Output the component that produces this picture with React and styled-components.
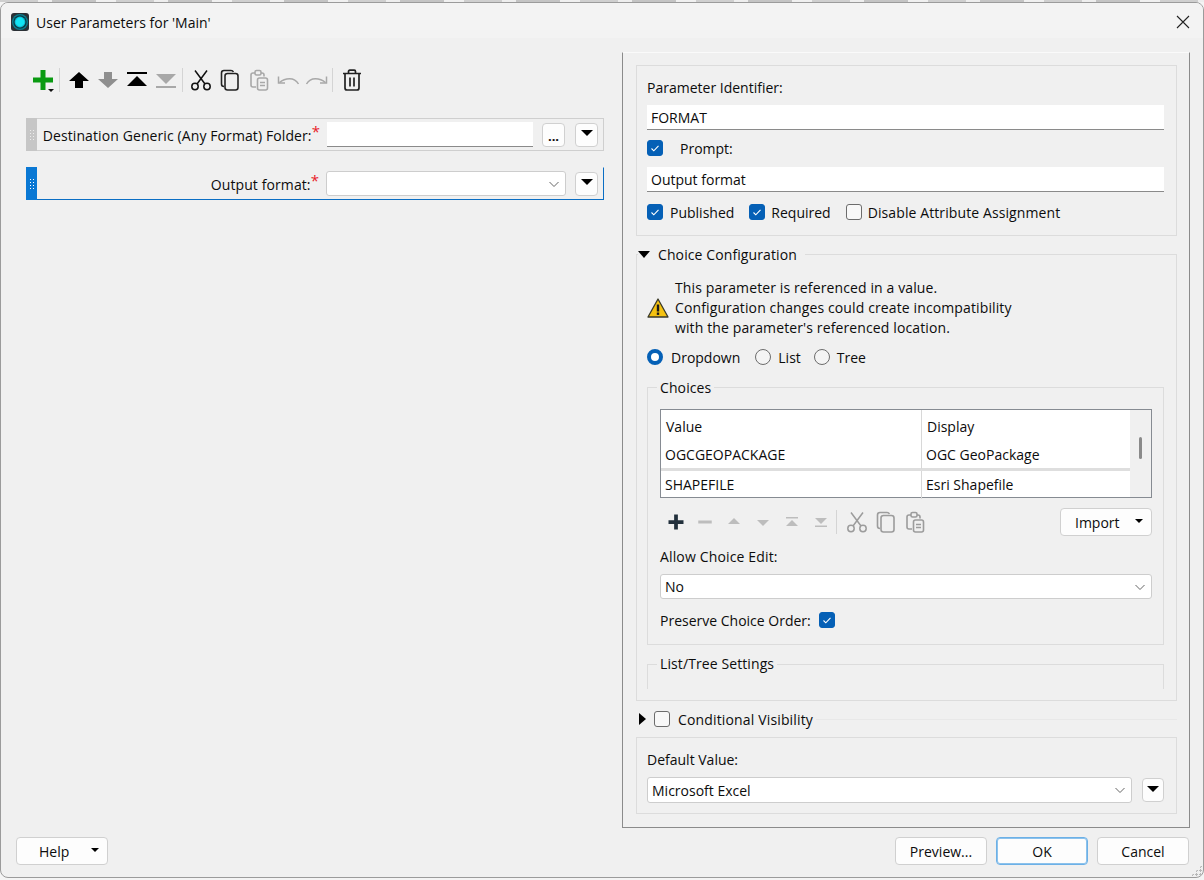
import React from "react";
import styled, { createGlobalStyle } from "styled-components";

const GlobalStyle = createGlobalStyle`
  html, body {
    margin: 0;
    padding: 0;
    background: #f4f4f4;
  }
  * {
    box-sizing: border-box;
  }
  body {
    font-family: "Open Sans", "Noto Sans", sans-serif;
    font-size: 14px;
    color: #0c0c0c;
  }
`;

// icons, all drawn on a 24 unit grid
const Plus = ({ color = "#0a9a12", size = 24 }) => (
  <svg width={size} height={size} viewBox="0 0 24 24">
    <path d="M9.5 2h5v7.5H22v5h-7.5V22h-5v-7.5H2v-5h7.5z" fill={color} />
  </svg>
);
const Minus = ({ size = 24, color = "#bdbdbd" }) => (
  <svg width={size} height={size} viewBox="0 0 24 24">
    <rect x="3" y="10" width="18" height="4" fill={color} />
  </svg>
);
const ArrowUp = ({ color, size = 24 }) => (
  <svg width={size} height={size} viewBox="0 0 24 24">
    <path d="M12 4l10 9h-6v7H8v-7H2z" fill={color} />
  </svg>
);
const ArrowDown = ({ color, size = 24 }) => (
  <svg width={size} height={size} viewBox="0 0 24 24">
    <path d="M12 20L2 11h6V4h8v7h6z" fill={color} />
  </svg>
);
const ToTop = ({ color, size = 24 }) => (
  <svg width={size} height={size} viewBox="0 0 24 24">
    <rect x="2" y="4" width="20" height="2" fill={color} />
    <path d="M12 8l10 10H2z" fill={color} />
  </svg>
);
const ToBottom = ({ color, size = 24 }) => (
  <svg width={size} height={size} viewBox="0 0 24 24">
    <rect x="2" y="18" width="20" height="2" fill={color} />
    <path d="M12 16L2 6h20z" fill={color} />
  </svg>
);
const SmallUp = ({ color }) => (
  <svg width="24" height="24" viewBox="0 0 24 24">
    <path d="M12 8l6 6H6z" fill={color} />
  </svg>
);
const SmallDown = ({ color }) => (
  <svg width="24" height="24" viewBox="0 0 24 24">
    <path d="M12 16l-6-6h12z" fill={color} />
  </svg>
);
const SmallTop = ({ color }) => (
  <svg width="24" height="24" viewBox="0 0 24 24">
    <rect x="6" y="7" width="12" height="1.5" fill={color} />
    <path d="M12 10l6 6H6z" fill={color} />
  </svg>
);
const SmallBottom = ({ color }) => (
  <svg width="24" height="24" viewBox="0 0 24 24">
    <rect x="6" y="15.5" width="12" height="1.5" fill={color} />
    <path d="M12 14L6 8h12z" fill={color} />
  </svg>
);
const Scissors = ({ color }) => (
  <svg width="24" height="24" viewBox="0 0 24 24" fill="none" stroke={color} strokeWidth="1.5">
    <circle cx="6" cy="18.5" r="3.2" />
    <circle cx="18" cy="18.5" r="3.2" />
    <path d="M8 16L18 2.5M16 16L6 2.5" />
  </svg>
);
const Copy = ({ color }) => (
  <svg width="24" height="24" viewBox="0 0 24 24" fill="none" stroke={color} strokeWidth="1.6">
    <path d="M6 18.5c-1.4 0-2.5-1-2.5-2.5V5c0-1.4 1-2.5 2.5-2.5h7c1.2 0 2 .6 2.4 1.5" />
    <rect x="7" y="5.5" width="13" height="16.5" rx="2.5" />
  </svg>
);
const Paste = ({ color }) => (
  <svg width="24" height="24" viewBox="0 0 24 24" fill="none" stroke={color} strokeWidth="1.6">
    <path d="M9 19H6c-1.2 0-2-1-2-2V7c0-1.2.8-2 2-2h2M14 5h1c1.2 0 2 .8 2 2v1.5" />
    <rect x="8" y="2.5" width="6" height="4.5" rx="1.5" />
    <rect x="10.5" y="10" width="10" height="12" rx="2" />
    <path d="M13 14.5h5M13 17.5h5" />
  </svg>
);
const Undo = ({ color }) => (
  <svg width="24" height="24" viewBox="0 0 24 24" fill="none" stroke={color} strokeWidth="1.5">
    <path d="M22.5 16c-2-3.5-5-5.3-9-5.3-3.5 0-6.8 1-10 3.8" />
    <path d="M2.5 8.5V15H9" />
  </svg>
);
const Redo = ({ color }) => (
  <svg width="24" height="24" viewBox="0 0 24 24" fill="none" stroke={color} strokeWidth="1.5">
    <path d="M1.5 16c2-3.5 5-5.3 9-5.3 3.5 0 6.8 1 10 3.8" />
    <path d="M21.5 8.5V15H15" />
  </svg>
);
const Trash = ({ color }) => (
  <svg width="24" height="24" viewBox="0 0 24 24" fill="none" stroke={color} strokeWidth="1.7">
    <path d="M3 5.5h18M8.5 5.5v-2c0-.8.5-1.3 1.3-1.3h4.4c.8 0 1.3.5 1.300 1.300v2" />
    <path d="M5 5.5V20c0 1.200.8 2 2 2h10c1.200 0 2-.8 2-2V5.500" />
    <path d="M10 9.500v9M14 9.500v9" />
  </svg>
);
const Chevron = () => (
  <svg width="12" height="12" viewBox="0 0 12 12" fill="none" stroke="#666" strokeWidth="1">
    <path d="M1.500 4L6 8.500 10.500 4" />
  </svg>
);
const CheckMark = () => (
  <svg width="12" height="12" viewBox="0 0 12 12" fill="none" stroke="#fff" strokeWidth="1.100">
    <path d="M2.500 6.500l2.300 2.300 4.700-5" />
  </svg>
);
const WarningIcon = () => (
  <svg width="22" height="22" viewBox="0 0 22 22">
    <path d="M11 2L21 20H1z" fill="#f5c211" stroke="#3a3a2a" strokeWidth="1.300" strokeLinejoin="round" />
    <rect x="9.800" y="7.500" width="2.400" height="7" fill="#1a1a1a" />
    <rect x="9.800" y="15.500" width="2.400" height="2.400" fill="#1a1a1a" />
  </svg>
);
const AppIcon = () => (
  <svg width="18" height="18" viewBox="0 0 18 18">
    <rect width="18" height="18" rx="3" fill="#2b3035" />
    <circle cx="9" cy="9" r="8" fill="#0a7f90" />
    <circle cx="9" cy="9" r="6.700" fill="#0a3c46" />
    <circle cx="9" cy="9" r="5.400" fill="#10b8cf" />
    <circle cx="9" cy="9" r="4.400" fill="#12e4f4" />
  </svg>
);
const CloseIcon = () => (
  <svg width="14" height="14" viewBox="0 0 14 14" stroke="#222" strokeWidth="1.100">
    <path d="M1 1l12 12M13 1L1 13" />
  </svg>
);

const Page = styled.div`
  width: 1204px;
  height: 880px;
  overflow: hidden;
`;

const BehindStrip = styled.div`
  height: 2px;
  background: repeating-linear-gradient(90deg, #cfcfcf 0 38px, #eeeeee 38px 52px, #c4c4c4 52px 96px, #f0f0f0 96px 116px);
`;

const Window = styled.div`
  position: relative;
  height: 876px;
  border: 1px solid #9b9b9b;
  border-radius: 8px;
  background: #f0f0f0;
  overflow: hidden;
`;

const TitleBar = styled.div`
  height: 35px;
  background: #f3f3f3;
  display: flex;
  align-items: center;
  padding: 3px 13px 0 10px;
`;

const Title = styled.div`
  margin-left: 7px;
  flex: 1;
  font-size: 14px;
`;

const Main = styled.div`
  display: flex;
  height: 789px;
`;

const LeftPane = styled.div`
  width: 621px;
  padding: 28px 18px 0 25px;
`;

const Toolbar = styled.div`
  display: flex;
  align-items: center;
  height: 28px;
`;

const ToolIcon = styled.span`
  display: flex;
  align-items: center;
  justify-content: center;
  width: ${(p) => p.$w || 29}px;
  height: 24px;
  flex: none;
`;

const ToolSep = styled.span`
  width: 1px;
  height: 24px;
  background: #d4d4d4;
  margin: 0 ${(p) => p.$right ?? 5}px 0 ${(p) => p.$left || 0}px;
  flex: none;
`;

const AddIcon = styled(ToolIcon)`
  position: relative;
  &::after {
    content: "";
    position: absolute;
    right: 5px;
    bottom: 0;
    border: 3px solid transparent;
    border-top-color: #111;
    border-bottom: 0;
  }
`;

const ParamRow = styled.div`
  display: flex;
  align-items: center;
  height: 33px;
  margin-top: ${(p) => p.$top}px;
  border: 1px solid ${(p) => (p.$active ? "transparent" : "#cfcfcf")};
  border-left: 0;
  ${(p) => p.$active && "border-right-color: #0a6ec4; border-bottom-color: #0a6ec4;"}
  padding-right: 5px;
`;

const Handle = styled.div`
  width: 11px;
  height: 33px;
  margin: -1px 0;
  flex: none;
  display: grid;
  grid-template-columns: 1px 1px;
  grid-auto-rows: 1px;
  gap: 2px;
  place-content: center;
  background: ${(p) => (p.$active ? "#0a78d4" : "#c6c6c6")};
  span {
    background: ${(p) => (p.$active ? "#fff" : "#ececec")};
  }
`;

const ParamLabel = styled.div`
  flex: 1;
  text-align: right;
  padding-right: 7px;
  white-space: nowrap;
  letter-spacing: 0.1px;
  em {
    font-style: normal;
    color: #e8202a;
    font-size: 15px;
    position: relative;
    top: -4px;
  }
`;

const TextInput = styled.div`
  height: 25px;
  width: ${(p) => (p.$w ? `${p.$w}px` : "100%")};
  background: #fff;
  border-bottom: 1px solid #8a8a8a;
  line-height: 26px;
  padding-left: 4px;
  margin-top: ${(p) => p.$top || 0}px;
  flex: none;
`;

const Select = styled.div`
  height: ${(p) => p.$h || 25}px;
  width: ${(p) => (p.$w ? `${p.$w}px` : "100%")};
  background: #fff;
  border: 1px solid #cdcdcd;
  border-radius: 3px;
  display: flex;
  align-items: center;
  justify-content: space-between;
  padding: 0 ${(p) => p.$chevron || 4}px 0 4px;
  margin-top: ${(p) => p.$top || 0}px;
  flex: none;
`;

const Button = styled.div`
  display: flex;
  align-items: center;
  justify-content: ${(p) => (p.$pad ? "flex-start" : "center")};
  padding-left: ${(p) => p.$pad || 0}px;
  position: relative;
  background: #fdfdfd;
  border: 1px solid ${(p) => (p.$primary ? "#6cb0e6" : "#d0d0d0")};
  ${(p) => p.$primary && "box-shadow: inset 0 0 0 1px #8cc2ec;"}
  border-radius: 4px;
  width: ${(p) => p.$w}px;
  height: ${(p) => p.$h || 28}px;
  margin-left: ${(p) => p.$left || 0}px;
  flex: none;
`;

const Caret = styled.span`
  position: absolute;
  right: ${(p) => p.$right}px;
  top: ${(p) => p.$top}px;
  border: ${(p) => p.$size}px solid transparent;
  border-top-color: #000;
  border-bottom: 0;
`;

const MenuCaret = styled.span`
  border: 6px solid transparent;
  border-top: 6px solid #000;
  border-bottom: 0;
  margin-top: -3px;
`;

const Dots = styled.span`
  font-weight: 700;
  line-height: 1;
  margin-top: 3px;
  font-size: 13px;
`;

const RightPanel = styled.div`
  width: 568px;
  height: 776px;
  margin-top: 14px;
  border: 1px solid #8b8b8b;
  border-top-color: #fafafa;
  padding: 12px 12px 0 13px;
  flex: none;
`;

const Section = styled.div`
  border: 1px solid #dcdcdc;
  height: ${(p) => p.$h}px;
  padding: 11px 12px 0 10px;
  margin-top: ${(p) => p.$top || 0}px;
`;

const Line = styled.div`
  display: flex;
  align-items: center;
  height: 20px;
  margin-top: ${(p) => p.$top || 0}px;
  white-space: nowrap;
  letter-spacing: ${(p) => p.$ls || 0}px;
`;

const Box = styled.span`
  width: 16px;
  height: 16px;
  border-radius: 3px;
  flex: none;
  display: flex;
  align-items: center;
  justify-content: center;
  background: ${(p) => (p.$on ? "#0560b6" : "#f8f8f8")};
  border: 1px solid ${(p) => (p.$on ? "#0560b6" : "#6c6c6c")};
  margin-left: ${(p) => p.$left || 0}px;
`;

const BoxLabel = styled.span`
  margin-left: ${(p) => p.$left || 7}px;
  letter-spacing: ${(p) => p.$ls || 0}px;
`;

const Radio = styled.span`
  width: 16px;
  height: 16px;
  border-radius: 50%;
  flex: none;
  background: ${(p) => (p.$on ? "#fff" : "#f4f4f4")};
  border: ${(p) => (p.$on ? "4px solid #0560b6" : "1px solid #6c6c6c")};
  margin-left: ${(p) => p.$left || 0}px;
`;

const Group = styled.fieldset`
  margin: ${(p) => p.$top || 0}px 0 0;
  padding: 0 12px 0 ${(p) => p.$pad}px;
  border: 1px solid #dcdcdc;
  height: ${(p) => p.$h}px;
  ${(p) => p.$open && "border-bottom: 0;"}
  min-width: 0;
`;

const Legend = styled.legend`
  height: 20px;
  line-height: 20px;
  padding: ${(p) => p.$padding};
  margin-left: ${(p) => p.$left || 0}px;
  display: flex;
  align-items: center;
  letter-spacing: 0.1px;
`;

const TriDown = styled.span`
  border: 6.5px solid transparent;
  border-top: 7px solid #000;
  border-bottom: 0;
  margin-right: 8px;
`;

const TriRight = styled.span`
  border: 6.5px solid transparent;
  border-left: 7px solid #000;
  border-right: 0;
  margin: 0 8px 0 3px;
  flex: none;
`;

const WarningRow = styled.div`
  display: flex;
  align-items: center;
  margin-top: 14px;
  line-height: 20px;
`;

const WarningText = styled.div`
  margin-left: 6px;
  letter-spacing: 0.12px;
`;

const ChoiceTable = styled.div`
  display: flex;
  height: 89px;
  margin-top: 12px;
  border: 1px solid #868b92;
  width: 492px;
`;

const TableBody = styled.div`
  width: 469px;
  background: #fff;
  flex: none;
`;

const TableRow = styled.div`
  display: grid;
  grid-template-columns: 261px 1fr;
  height: ${(p) => p.$h}px;
  line-height: ${(p) => p.$lh}px;
  border-bottom: ${(p) => (p.$rule ? "3px solid #dedede" : "0")};
  div {
    padding-left: ${(p) => p.$indent}px;
  }
  div:first-child {
    border-right: 1px solid #d8d8d8;
  }
`;

const ScrollTrack = styled.div`
  flex: 1;
  background: #f0f0f0;
  padding: 27px 0 0 9px;
`;

const ScrollThumb = styled.div`
  width: 3px;
  height: 22px;
  background: #8a8a8a;
  border-radius: 2px;
`;

const ChoiceTools = styled.div`
  display: flex;
  align-items: center;
  justify-content: space-between;
  margin-top: 10px;
  width: 492px;
  padding-left: 1px;
`;

const Rule = styled.span`
  flex: 1;
  height: 1px;
  background: #e8e8e8;
  margin-left: 3px;
`;

const DefaultRow = styled.div`
  display: flex;
  align-items: center;
  margin-top: 8px;
`;

const Footer = styled.div`
  display: flex;
  align-items: center;
  padding: 10px 14px 0 15px;
`;

const Spacer = styled.div`
  flex: 1;
`;

const Grip = styled.div`
  position: absolute;
  right: 1px;
  bottom: 1px;
  width: 11px;
  height: 11px;
  background: radial-gradient(circle at 1.5px 1.5px, #b8b8b8 1.2px, transparent 1.3px) 0 0 / 4px 4px;
  clip-path: polygon(100% 0, 100% 100%, 0 100%);
`;

const grey = "#a8a8a8";
const light = "#bdbdbd";
const stroke = "#9c9c9c";
const handleDots = [0, 1, 2, 3, 4, 5, 6, 7];

export default function App() {
  return (
    <Page>
      <GlobalStyle />
      <BehindStrip />
      <Window>
        <TitleBar>
          <AppIcon />
          <Title>User Parameters for 'Main'</Title>
          <CloseIcon />
        </TitleBar>
        <Main>
          <LeftPane>
            <Toolbar>
              <AddIcon $w={33}><Plus /></AddIcon>
              <ToolSep $right={4} />
              <ToolIcon><ArrowUp color="#000" /></ToolIcon>
              <ToolIcon><ArrowDown color="#8f8f8f" /></ToolIcon>
              <ToolIcon><ToTop color="#000" /></ToolIcon>
              <ToolIcon><ToBottom color={grey} /></ToolIcon>
              <ToolSep $left={2} $right={3} />
              <ToolIcon><Scissors color="#111" /></ToolIcon>
              <ToolIcon><Copy color="#222" /></ToolIcon>
              <ToolIcon><Paste color={grey} /></ToolIcon>
              <ToolIcon><Undo color={grey} /></ToolIcon>
              <ToolIcon><Redo color={grey} /></ToolIcon>
              <ToolSep $left={1} $right={6} />
              <ToolIcon $w={25}><Trash color="#222" /></ToolIcon>
            </Toolbar>
            <ParamRow $top={24}>
              <Handle>
                {handleDots.map((d) => <span key={d} />)}
              </Handle>
              <ParamLabel>Destination Generic (Any Format) Folder:<em>*</em></ParamLabel>
              <TextInput $w={206} />
              <Button $w={23} $h={24} $left={9}><Dots>...</Dots></Button>
              <Button $w={23} $h={24} $left={10}><MenuCaret /></Button>
            </ParamRow>
            <ParamRow $top={16} $active>
              <Handle $active>
                {handleDots.map((d) => <span key={d} />)}
              </Handle>
              <ParamLabel>Output format:<em>*</em></ParamLabel>
              <Select $w={240} $chevron={5}><span /><Chevron /></Select>
              <Button $w={23} $h={24} $left={9}><MenuCaret /></Button>
            </ParamRow>
          </LeftPane>
          <RightPanel>
            <Section $h={171}>
              <Line>Parameter Identifier:</Line>
              <TextInput $top={8}>FORMAT</TextInput>
              <Line $top={8}>
                <Box $on><CheckMark /></Box>
                <BoxLabel $left={17}>Prompt:</BoxLabel>
              </Line>
              <TextInput $top={9}>Output format</TextInput>
              <Line $top={10}>
                <Box $on><CheckMark /></Box>
                <BoxLabel>Published</BoxLabel>
                <Box $on $left={15}><CheckMark /></Box>
                <BoxLabel $left={6}>Required</BoxLabel>
                <Box $left={15} />
                <BoxLabel $left={6} $ls={0.1}>Disable Attribute Assignment</BoxLabel>
              </Line>
            </Section>
            <Group $top={8} $pad={10} $h={457}>
              <Legend $padding="1px 8px 0 0" $left={-9}>
                <TriDown />
                Choice Configuration
              </Legend>
              <WarningRow>
                <WarningIcon />
                <WarningText>
                  This parameter is referenced in a value.
                  <br />
                  Configuration changes could create incompatibility
                  <br />
                  with the parameter's referenced location.
                </WarningText>
              </WarningRow>
              <Line $top={9}>
                <Radio $on />
                <BoxLabel $left={8}>Dropdown</BoxLabel>
                <Radio $left={15} />
                <BoxLabel>List</BoxLabel>
                <Radio $left={13} />
                <BoxLabel>Tree</BoxLabel>
              </Line>
              <Group $top={10} $pad={12} $h={268}>
                <Legend $padding="2px 3px 0" $left={-3}>Choices</Legend>
                <ChoiceTable>
                  <TableBody>
                    <TableRow $h={31} $lh={33} $indent={5}>
                      <div>Value</div>
                      <div>Display</div>
                    </TableRow>
                    <TableRow $h={30} $lh={28} $indent={4} $rule>
                      <div>OGCGEOPACKAGE</div>
                      <div>OGC GeoPackage</div>
                    </TableRow>
                    <TableRow $h={26} $lh={28} $indent={4}>
                      <div>SHAPEFILE</div>
                      <div>Esri Shapefile</div>
                    </TableRow>
                  </TableBody>
                  <ScrollTrack><ScrollThumb /></ScrollTrack>
                </ChoiceTable>
                <ChoiceTools>
                  <Toolbar>
                    <ToolIcon><Plus color="#22303c" size={18} /></ToolIcon>
                    <ToolIcon><Minus size={18} /></ToolIcon>
                    <ToolIcon><SmallUp color={light} /></ToolIcon>
                    <ToolIcon><SmallDown color={light} /></ToolIcon>
                    <ToolIcon><SmallTop color={light} /></ToolIcon>
                    <ToolIcon><SmallBottom color={light} /></ToolIcon>
                    <ToolSep $left={1} />
                    <ToolIcon><Scissors color={stroke} /></ToolIcon>
                    <ToolIcon><Copy color={stroke} /></ToolIcon>
                    <ToolIcon><Paste color={stroke} /></ToolIcon>
                  </Toolbar>
                  <Button $w={92} $pad={14}>
                    Import
                    <Caret $size={4} $right={8} $top={10} />
                  </Button>
                </ChoiceTools>
                <Line $top={10} $ls={0.15}>Allow Choice Edit:</Line>
                <Select $top={8} $w={492} $chevron={5}>No<Chevron /></Select>
                <Line $top={11}>
                  Preserve Choice Order:
                  <Box $on $left={8}><CheckMark /></Box>
                </Line>
              </Group>
              <Group $top={9} $pad={12} $h={35} $open>
                <Legend $padding="0 3px" $left={-3}>List/Tree Settings</Legend>
              </Group>
            </Group>
            <Line $top={8}>
              <TriRight />
              <Box />
              <BoxLabel $left={8} $ls={0.15}>Conditional Visibility</BoxLabel>
              <Rule />
            </Line>
            <Section $h={77} $top={8}>
              <Line>Default Value:</Line>
              <DefaultRow>
                <Select $w={485} $h={26} $chevron={5}>Microsoft Excel<Chevron /></Select>
                <Button $w={22} $h={24} $left={10}><MenuCaret /></Button>
              </DefaultRow>
            </Section>
          </RightPanel>
        </Main>
        <Footer>
          <Button $w={92} $pad={22}>
            Help
            <Caret $size={4} $right={8} $top={10} />
          </Button>
          <Spacer />
          <Button $w={92}>Preview...</Button>
          <Button $w={92} $left={9} $primary>OK</Button>
          <Button $w={92} $left={9}>Cancel</Button>
        </Footer>
        <Grip />
      </Window>
    </Page>
  );
}
